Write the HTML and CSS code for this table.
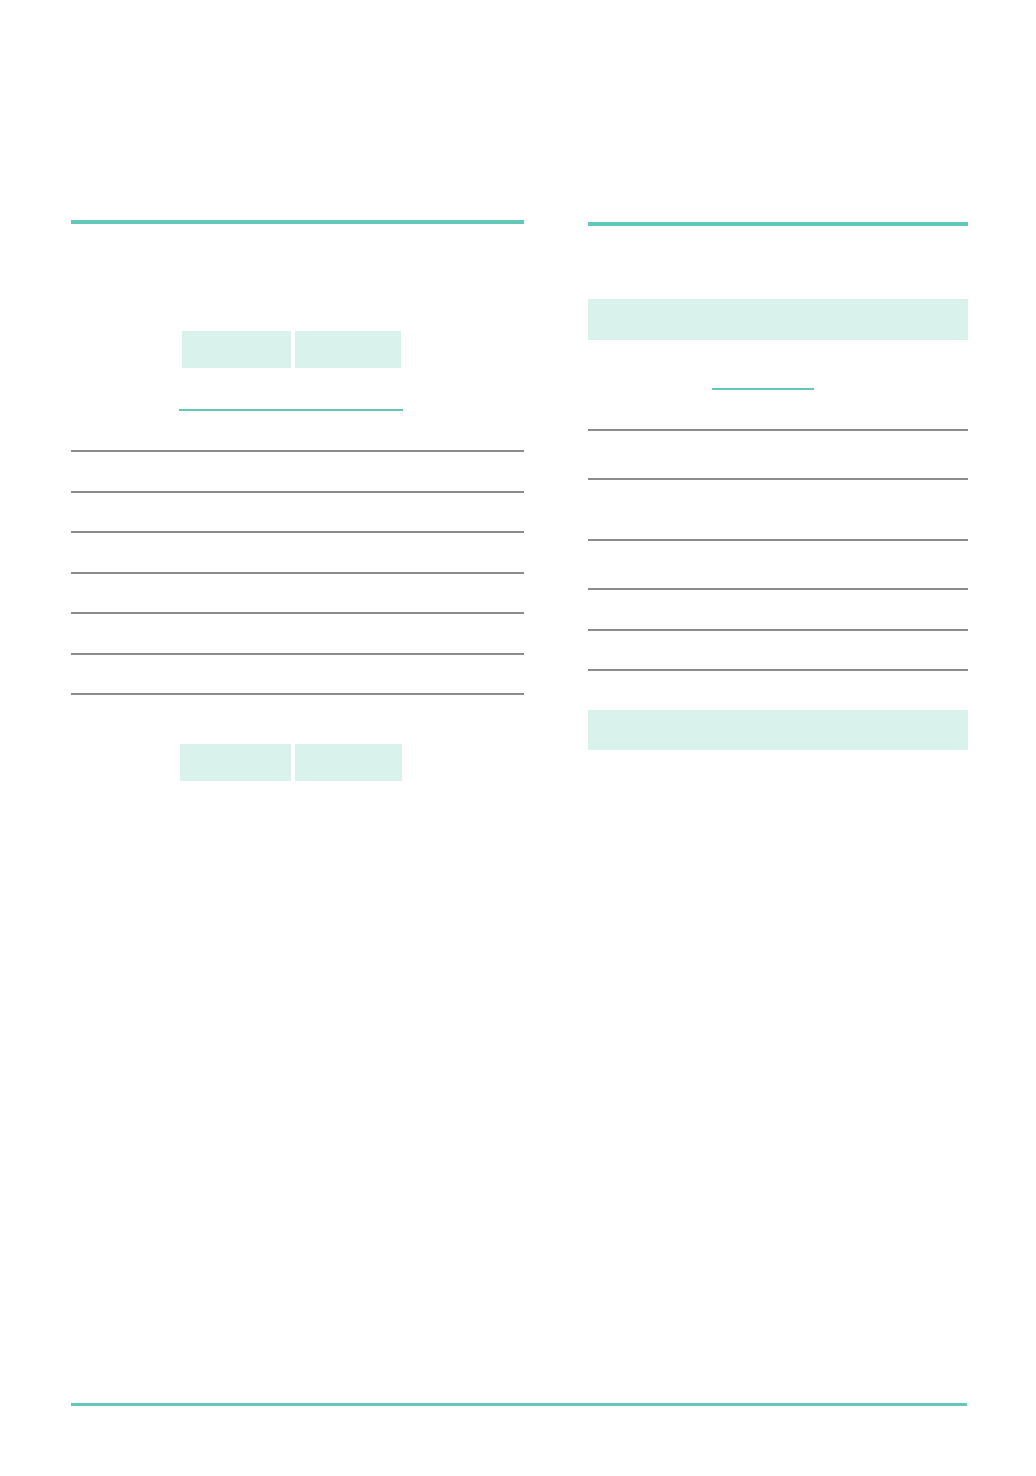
FILE: index.html
```html
<!DOCTYPE html>
<html lang="en">
<head>
<meta charset="utf-8">
<title>Report page</title>
<link rel="stylesheet" href="styles.css">
</head>
<body>
<main class="page">
  <section class="col col-left">
    <div class="rule-top"></div>
    <div class="grid-left head-cells">
      <div class="cell shade c2"></div>
      <div class="cell shade c3"></div>
    </div>
    <div class="grid-left">
      <div class="underline span23"></div>
    </div>
    <div class="rows-left">
      <div class="row h39"></div>
      <div class="row h39"></div>
      <div class="row h38"></div>
      <div class="row h39"></div>
      <div class="row h38"></div>
      <div class="row h39"></div>
      <div class="row h38"></div>
    </div>
    <div class="grid-left foot-cells">
      <div class="cell shade c2b"></div>
      <div class="cell shade c3b"></div>
    </div>
  </section>

  <section class="col col-right">
    <div class="rule-top"></div>
    <div class="band band-head"></div>
    <div class="grid-right">
      <div class="underline c2r"></div>
    </div>
    <div class="rows-right">
      <div class="row h39"></div>
      <div class="row h47"></div>
      <div class="row h59"></div>
      <div class="row h47"></div>
      <div class="row h39"></div>
      <div class="row h38"></div>
    </div>
    <div class="band band-foot"></div>
  </section>
</main>
<footer class="footer-rule"></footer>
</body>
</html>
```

FILE: styles.css
```css
html, body {
  margin: 0;
  padding: 0;
  background: #ffffff;
  font-family: "Liberation Sans", Arial, sans-serif;
}

body {
  display: flex;
  flex-direction: column;
  min-height: 1476px;
}

.page {
  display: flex;
  gap: 64px;
  padding: 220px 0 0 71px;
}

.col {
  display: flex;
  flex-direction: column;
}

.col-left {
  width: 453px;
}

.col-right {
  width: 380px;
  padding-top: 2px;
}

.rule-top {
  height: 4px;
  background: #63c8b7;
}

.grid-left {
  display: grid;
  grid-template-columns: 108px 114px 109px 122px;
}

.grid-right {
  display: grid;
  grid-template-columns: 124px 102px 154px;
}

.head-cells {
  margin-top: 107px;
  height: 37px;
}

.foot-cells {
  margin-top: 49px;
  height: 37px;
}

.shade {
  background: #d9f3ec;
}

.c2 {
  grid-column: 2;
  margin: 0 2px 0 3px;
}

.c3 {
  grid-column: 3;
  margin: 0 1px 0 2px;
}

.c2b {
  grid-column: 2;
  margin: 0 2px 0 1px;
}

.c3b {
  grid-column: 3;
  margin: 0 0 0 2px;
}

.underline {
  height: 2px;
  background: #63c8b7;
  margin-top: 41px;
}

.span23 {
  grid-column: 2 / span 2;
  margin-right: -1px;
}

.c2r {
  grid-column: 2;
  margin-top: 48px;
}

.row {
  border-bottom: 2px solid #8c8c8c;
}

.h38 { height: 38px; }
.h39 { height: 39px; }
.h47 { height: 47px; }
.h59 { height: 59px; }

.band {
  background: #d9f3ec;
}

.band-head {
  margin-top: 73px;
  height: 41px;
}

.band-foot {
  margin-top: 39px;
  height: 40px;
}

.footer-rule {
  margin: auto 69px 70px 71px;
  height: 3px;
  background: #63c8b7;
}
```
